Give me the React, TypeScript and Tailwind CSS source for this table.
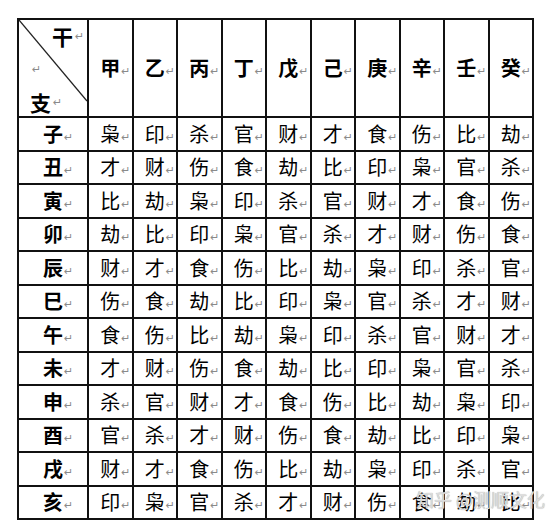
import React from "react";

const stems = ["甲", "乙", "丙", "丁", "戊", "己", "庚", "辛", "壬", "癸"];
const rows: [string, string[]][] = [
  ["子", ["枭", "印", "杀", "官", "财", "才", "食", "伤", "比", "劫"]],
  ["丑", ["才", "财", "伤", "食", "劫", "比", "印", "枭", "官", "杀"]],
  ["寅", ["比", "劫", "枭", "印", "杀", "官", "财", "才", "食", "伤"]],
  ["卯", ["劫", "比", "印", "枭", "官", "杀", "才", "财", "伤", "食"]],
  ["辰", ["财", "才", "食", "伤", "比", "劫", "枭", "印", "杀", "官"]],
  ["巳", ["伤", "食", "劫", "比", "印", "枭", "官", "杀", "才", "财"]],
  ["午", ["食", "伤", "比", "劫", "枭", "印", "杀", "官", "财", "才"]],
  ["未", ["才", "财", "伤", "食", "劫", "比", "印", "枭", "官", "杀"]],
  ["申", ["杀", "官", "财", "才", "食", "伤", "比", "劫", "枭", "印"]],
  ["酉", ["官", "杀", "才", "财", "伤", "食", "劫", "比", "印", "枭"]],
  ["戌", ["财", "才", "食", "伤", "比", "劫", "枭", "印", "杀", "官"]],
  ["亥", ["印", "枭", "官", "杀", "才", "财", "伤", "食", "劫", "比"]],
];

function Mark() {
  return (
    <span className="inline-block w-0 overflow-visible align-middle">
      <span className="ml-[1px] text-[11px] leading-none text-[#8a8a8a] font-['DejaVu_Sans',sans-serif] font-normal">
        ↵
      </span>
    </span>
  );
}

function Cell({ text, bold }: { text: string; bold?: boolean }) {
  return (
    <div className="bg-white flex items-center justify-center">
      <span
        className={`text-[20px] leading-none text-black ${bold ? "font-bold" : "font-normal"}`}
      >
        {text}
      </span>
      <Mark />
    </div>
  );
}

export default function App() {
  return (
    <div className="w-[550px] h-[530px] bg-white font-['Noto_Sans_CJK_SC',sans-serif] relative">
      <div className="pl-[17px] pt-[18px]">
        <div className="grid grid-cols-[68px_repeat(10,42.5px)] grid-rows-[96px_repeat(12,31.5px)] gap-[2px] p-[2px] bg-[#111] w-[517px]">
          <div className="bg-white relative">
            <svg className="absolute inset-0" width="68" height="96" viewBox="0 0 68 96">
              <line x1="0" y1="0" x2="68" y2="81" stroke="#222" strokeWidth="1.3" />
            </svg>
            <div className="relative flex flex-col h-full pt-[5px] pl-[11px]">
              <div className="flex items-center pl-[22px] h-[22px]">
                <span className="text-[21px] leading-none font-bold">干</span>
                <span className="ml-[2px] text-[11px] leading-none text-[#8a8a8a] font-['DejaVu_Sans',sans-serif]">↵</span>
              </div>
              <div className="flex items-center h-[44px] pl-[2px]">
                <span className="text-[11px] leading-none text-[#8a8a8a] font-['DejaVu_Sans',sans-serif]">↵</span>
              </div>
              <div className="flex items-center h-[22px]">
                <span className="text-[21px] leading-none font-bold">支</span>
                <span className="ml-[2px] text-[11px] leading-none text-[#8a8a8a] font-['DejaVu_Sans',sans-serif]">↵</span>
              </div>
            </div>
          </div>
          {stems.map((s) => (
            <Cell key={s} text={s} bold />
          ))}
          {rows.map(([branch, gods]) => (
            <React.Fragment key={branch}>
              <Cell text={branch} bold />
              {gods.map((g, i) => (
                <Cell key={i} text={g} />
              ))}
            </React.Fragment>
          ))}
        </div>
      </div>
      <div className="absolute left-[416px] top-[490px] whitespace-nowrap text-[18px] leading-none text-[#dcdcdc] [text-shadow:0_0_1px_#999] select-none">
        知乎 @测顺文化
      </div>
    </div>
  );
}
